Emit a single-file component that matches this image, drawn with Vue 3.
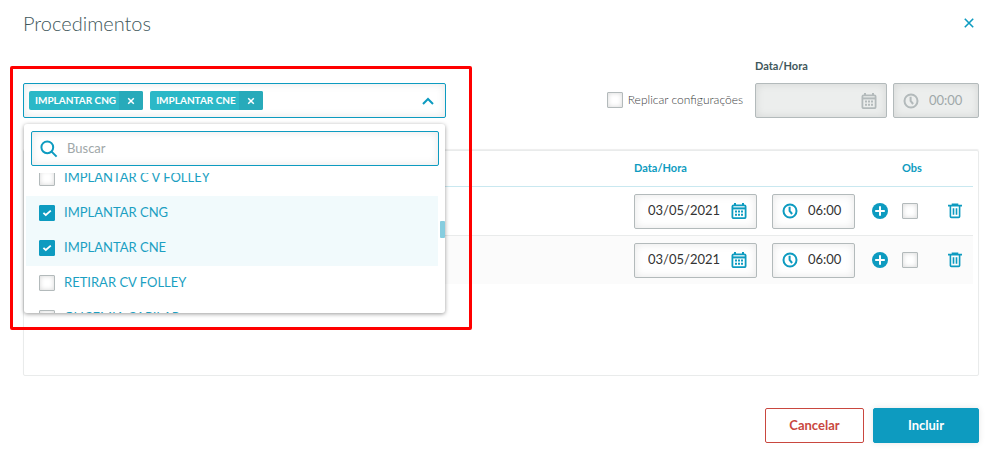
<template>
  <main class="modal">
    <header class="modal-header">
      <h1>Procedimentos</h1>
      <button type="button" class="icon-button close" aria-label="Fechar">
        <svg width="12" height="12" viewBox="0 0 12 12"><path d="M1.8 1.8l8.4 8.4M10.2 1.8l-8.4 8.4" /></svg>
      </button>
    </header>

    <section class="toolbar">
      <div class="picker">
        <div class="picker-control">
          <span v-for="tag in selected" :key="tag.name" class="tag">
            <span class="tag-label">{{ tag.name }}</span>
            <button type="button" class="tag-remove" :aria-label="'Remover ' + tag.name" @click="tag.checked = false">
              <svg width="8" height="8" viewBox="0 0 8 8"><path d="M1.2 1.2l5.6 5.6M6.8 1.2L1.2 6.8" /></svg>
            </button>
          </span>
          <button type="button" class="icon-button toggle" aria-label="Fechar lista" @click="open = !open">
            <svg width="12" height="8" viewBox="0 0 12 8"><path d="M1 7l5-5 5 5" /></svg>
          </button>
        </div>

        <div v-if="open" class="dropdown">
          <div class="search">
            <svg width="18" height="18" viewBox="0 0 18 18"><circle cx="7.3" cy="7.3" r="5.9" /><path d="M11.6 11.6l5 5" /></svg>
            <input v-model="search" type="text" placeholder="Buscar" aria-label="Buscar" />
          </div>
          <div ref="list" class="options">
            <label v-for="item in filtered" :key="item.name" class="option" :class="{ checked: item.checked }">
              <input v-model="item.checked" type="checkbox" class="check" />
              <span>{{ item.name }}</span>
            </label>
          </div>
          <span class="scroll-thumb"></span>
        </div>
        <div class="highlight"></div>
      </div>

      <div class="defaults">
        <label class="replicate">
          <input v-model="replicate" type="checkbox" class="check" />
          <span>Replicar configurações</span>
        </label>
        <div class="default-date">
          <label for="default-date">Data/Hora</label>
          <div class="default-fields">
            <div class="field date disabled">
              <input id="default-date" type="text" disabled />
              <svg class="calendar" width="16" height="16" viewBox="0 0 16 16"><path d="M4 0v3M12 0v3" /><rect x="1.4" y="2.4" width="13.2" height="12.8" rx="1.2" /><path d="M1.5 5.4h13" /><path class="dots" d="M4 8.6h8M4 11.8h8" /></svg>
            </div>
            <div class="field time disabled">
              <svg width="16" height="16" viewBox="0 0 16 16"><circle cx="8" cy="8" r="6.5" /><path d="M7.6 3.8V8l2.5 3" /></svg>
              <input type="text" value="00:00" aria-label="Hora" disabled />
            </div>
          </div>
        </div>
      </div>
    </section>

    <section class="panel">
      <table>
        <thead>
          <tr>
            <th></th>
            <th class="col-date">Data/Hora</th>
            <th class="col-time"></th>
            <th class="col-add"></th>
            <th class="col-obs">Obs</th>
            <th class="col-delete"></th>
          </tr>
        </thead>
        <tbody>
          <tr v-for="(row, index) in rows" :key="index">
            <td></td>
            <td>
              <div class="field date">
                <input v-model="row.date" type="text" aria-label="Data" />
                <svg class="calendar" width="16" height="16" viewBox="0 0 16 16"><path d="M4 0v3M12 0v3" /><rect x="1.4" y="2.4" width="13.2" height="12.8" rx="1.2" /><path d="M1.5 5.4h13" /><path class="dots" d="M4 8.6h8M4 11.8h8" /></svg>
              </div>
            </td>
            <td>
              <div class="field time">
                <svg width="16" height="16" viewBox="0 0 16 16"><circle cx="8" cy="8" r="6.5" /><path d="M7.6 3.8V8l2.5 3" /></svg>
                <input v-model="row.time" type="text" aria-label="Hora" />
              </div>
            </td>
            <td>
              <button type="button" class="icon-button" aria-label="Adicionar horário">
                <svg width="16" height="16" viewBox="0 0 16 16"><circle class="solid" cx="8" cy="8" r="8" /><path class="plus" d="M8 3.2v9.6M3.2 8h9.6" /></svg>
              </button>
            </td>
            <td><input v-model="row.obs" type="checkbox" class="check" aria-label="Obs" /></td>
            <td>
              <button type="button" class="icon-button" aria-label="Excluir">
                <svg width="14" height="16" viewBox="0 0 14 16"><path class="trash" d="M0 2.6h14M4.5 2.2V1.4h5v.8M2.4 3v10.4q0 1 1 1h7.2q1 0 1-1V3M5.5 5.2v6.6M8.5 5.2v6.6" /></svg>
              </button>
            </td>
          </tr>
        </tbody>
      </table>
    </section>

    <footer class="modal-footer">
      <button type="button" class="btn btn-cancel">Cancelar</button>
      <button type="button" class="btn btn-primary">Incluir</button>
    </footer>
  </main>
</template>

<script setup>
import { ref, computed, onMounted } from 'vue'

const open = ref(true)
const search = ref('')
const replicate = ref(false)
const list = ref(null)

const items = ref([
  { name: 'IMPLANTAR C V FOLLEY', checked: false },
  { name: 'IMPLANTAR CNG', checked: true },
  { name: 'IMPLANTAR CNE', checked: true },
  { name: 'RETIRAR CV FOLLEY', checked: false },
  { name: 'GLICEMIA CAPILAR', checked: false }
])

const rows = ref([
  { date: '03/05/2021', time: '06:00', obs: false },
  { date: '03/05/2021', time: '06:00', obs: false }
])

const selected = computed(() => items.value.filter(i => i.checked))
const filtered = computed(() =>
  items.value.filter(i => i.name.includes(search.value.toUpperCase()))
)

onMounted(() => {
  list.value.scrollTop = 12
})
</script>

<style>
body {
  margin: 0;
  background: #fff;
}
</style>

<style scoped>
* {
  box-sizing: border-box;
}
.modal {
  padding: 7px 23px 12px;
  color: #40575b;
  font-family: Lato, "Open Sans", sans-serif;
  font-size: 13px;
}
button,
input {
  font: inherit;
}
button {
  cursor: pointer;
}
svg {
  display: block;
  flex: none;
  fill: none;
  stroke: #0d9bc0;
  stroke-width: 2;
}
.modal-header {
  display: flex;
  align-items: center;
  justify-content: space-between;
  height: 32px;
}
h1 {
  margin: 0;
  font-size: 20px;
  font-weight: 300;
}
.icon-button {
  display: block;
  padding: 0;
  border: 0;
  background: none;
}
.close {
  margin-right: 4px;
}
.close svg {
  stroke-width: 1.6;
}
.toolbar {
  display: grid;
  grid-template-columns: minmax(0, 1fr) 533px;
  align-items: end;
  margin-top: 19px;
}
.picker {
  position: relative;
}
.picker-control {
  display: flex;
  align-items: center;
  gap: 7px;
  height: 35px;
  padding: 0 11px 0 5px;
  border: 1px solid #0d9bc0;
  border-radius: 2px;
  box-shadow: inset 0 0 8px rgba(0, 0, 0, 0.1);
}
.tag {
  display: flex;
  height: 19px;
  border-radius: 2px;
  overflow: hidden;
  background: #2bb8c7;
  color: #fff;
  font-size: 10px;
  font-weight: 700;
  line-height: 19px;
}
.tag-label {
  padding: 0 3px 0 6px;
}
.tag-remove {
  display: flex;
  align-items: center;
  justify-content: center;
  width: 24px;
  padding: 0;
  border: 0;
  background: #28aaba;
}
.tag-remove svg {
  stroke: #fff;
  stroke-width: 1.5;
}
.toggle {
  margin-left: auto;
}
.dropdown {
  position: absolute;
  top: 41px;
  left: 1px;
  right: 1px;
  z-index: 1;
  padding: 7px 0 0;
  border-radius: 3px;
  background: #fff;
  box-shadow: 0 1px 4px rgba(0, 0, 0, 0.4);
}
.search {
  display: flex;
  align-items: center;
  gap: 9px;
  height: 35px;
  margin: 0 6px 7px 7px;
  padding: 0 8px;
  border: 1px solid #0d9bc0;
  border-radius: 2px;
  box-shadow: inset 0 0 8px rgba(0, 0, 0, 0.1);
}
.search input {
  flex: 1;
  min-width: 0;
  padding: 0 0 2px;
  border: 0;
  outline: 0;
  background: none;
}
.search input::placeholder {
  color: #9fa8a9;
}
.options {
  height: 140px;
  margin: 0 7px 0 2px;
  overflow: hidden;
}
.option {
  display: flex;
  align-items: center;
  gap: 9px;
  height: 35px;
  padding: 0 13px 1px;
  color: #1b9fc2;
}
.option span {
  padding-bottom: 3px;
}
.option.checked {
  background: #f1fafc;
}
.scroll-thumb {
  position: absolute;
  top: 97px;
  right: 0;
  width: 5px;
  height: 17px;
  border-radius: 1px;
  background: #86cddf;
}
.highlight {
  position: absolute;
  top: -17px;
  left: -13px;
  right: -26px;
  z-index: 2;
  height: 264px;
  border: 3px solid #f00;
  border-radius: 2px;
  pointer-events: none;
}
.check {
  display: block;
  appearance: none;
  flex: none;
  width: 16px;
  height: 16px;
  margin: 0;
  border: 1px solid #b3babb;
  border-radius: 1px;
  background: #fff;
  box-shadow: inset 0 0 5px rgba(0, 0, 0, 0.16);
}
.check:checked {
  border-color: #0d9bc0;
  background: #0d9bc0 url("data:image/svg+xml,%3Csvg xmlns='http://www.w3.org/2000/svg' viewBox='0 0 14 14'%3E%3Cpath d='M3.4 6.8l2.4 2.2 5-4.4' fill='none' stroke='white' stroke-width='1.8'/%3E%3C/svg%3E");
  box-shadow: none;
}
.defaults {
  display: flex;
  align-items: flex-end;
  justify-content: flex-end;
  gap: 12px;
}
.replicate {
  display: flex;
  align-items: center;
  gap: 5px;
  height: 35px;
  padding-bottom: 2px;
  color: #3c4042;
  font-size: 12px;
  font-weight: 300;
}
.default-date > label {
  display: block;
  margin-bottom: 9px;
  font-size: 11px;
  font-weight: 700;
  line-height: 16px;
}
.default-fields {
  display: flex;
  gap: 6px;
}
.field {
  display: flex;
  align-items: center;
  height: 35px;
  border: 1px solid #b3babb;
  border-radius: 2px;
  background: #fff;
  box-shadow: inset 0 0 8px rgba(0, 0, 0, 0.1);
}
.field input {
  flex: 1;
  min-width: 0;
  width: 0;
  padding: 0 0 2px;
  border: 0;
  outline: 0;
  background: none;
  color: #333;
}
.field.date {
  width: 123px;
  padding: 0 9px 0 13px;
}
.field.time {
  gap: 10px;
  width: 83px;
  padding: 0 9px;
}
.field.disabled {
  background: #eceeed;
}
.field.disabled input {
  color: #9fa8a9;
}
.field.disabled svg {
  stroke: #b3babb;
}
.field.date.disabled {
  width: 132px;
}
.field.time.disabled {
  width: 86px;
}
.calendar rect {
  stroke-width: 1.8;
}
.calendar .dots {
  stroke-dasharray: 2 1;
}
.solid {
  fill: #0d9bc0;
  stroke: none;
}
.plus {
  stroke: #fff;
}
.trash {
  stroke-width: 1.6;
}
.panel {
  min-height: 226px;
  margin-top: 32px;
  padding: 0 5px;
  border: 1px solid #e9ebeb;
  border-radius: 2px;
  box-shadow: 0 -1px 1px #eee;
}
table {
  width: 100%;
  border-spacing: 0;
  table-layout: fixed;
}
th {
  height: 36px;
  padding: 0 0 2px;
  border-bottom: 1px solid #c9e8f0;
  color: #0d9bc0;
  font-size: 11px;
  font-weight: 700;
  text-align: left;
}
td {
  height: 49px;
  padding: 0;
  border-bottom: 1px solid #e9ebeb;
}
tbody tr:nth-child(even) {
  background: #fbfbfb;
}
tbody tr:last-child td {
  height: 48px;
  border-bottom: 0;
}
.col-date {
  width: 138px;
}
.col-time {
  width: 100px;
}
.col-add {
  width: 30px;
}
.col-obs {
  width: 46px;
}
.col-delete {
  width: 25px;
}
.modal-footer {
  display: flex;
  justify-content: flex-end;
  gap: 9px;
  margin-top: 32px;
}
.btn {
  height: 35px;
  padding: 0 0 2px;
  border: 1px solid #0d9bc0;
  border-radius: 2px;
  font-weight: 700;
}
.btn-cancel {
  width: 99px;
  border-color: #c9473f;
  background: #fff;
  color: #c9473f;
}
.btn-primary {
  width: 106px;
  background: #0d9bc0;
  color: #fff;
  box-shadow: 0 0 6px rgba(0, 0, 0, 0.1);
}
</style>
